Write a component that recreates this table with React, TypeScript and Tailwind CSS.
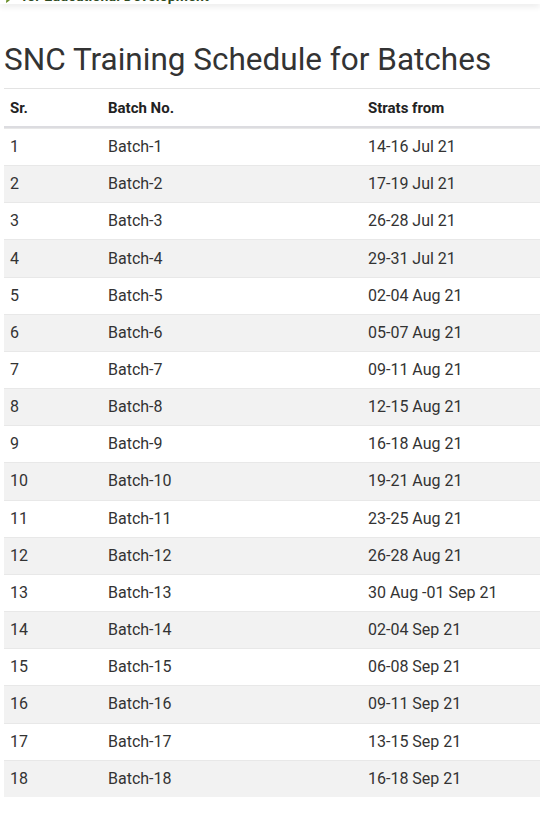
import React from "react";

const rows: [string, string, string][] = [
  ["1", "Batch-1", "14-16 Jul 21"],
  ["2", "Batch-2", "17-19 Jul 21"],
  ["3", "Batch-3", "26-28 Jul 21"],
  ["4", "Batch-4", "29-31 Jul 21"],
  ["5", "Batch-5", "02-04 Aug 21"],
  ["6", "Batch-6", "05-07 Aug 21"],
  ["7", "Batch-7", "09-11 Aug 21"],
  ["8", "Batch-8", "12-15 Aug 21"],
  ["9", "Batch-9", "16-18 Aug 21"],
  ["10", "Batch-10", "19-21 Aug 21"],
  ["11", "Batch-11", "23-25 Aug 21"],
  ["12", "Batch-12", "26-28 Aug 21"],
  ["13", "Batch-13", "30 Aug -01 Sep 21"],
  ["14", "Batch-14", "02-04 Sep 21"],
  ["15", "Batch-15", "06-08 Sep 21"],
  ["16", "Batch-16", "09-11 Sep 21"],
  ["17", "Batch-17", "13-15 Sep 21"],
  ["18", "Batch-18", "16-18 Sep 21"],
];

export default function App() {
  return (
    <div className="w-[540px] h-[838px] bg-white overflow-hidden" style={{ fontFamily: "Roboto, 'Noto Sans', sans-serif" }}>
      <div className="relative h-[4px] overflow-hidden bg-white shadow-[0_2px_6px_rgba(0,0,0,0.12)]">
        <div className="absolute left-[4px] bottom-[1px] flex items-end gap-[6px] leading-[14px]">
          <svg width="12" height="12" viewBox="0 0 12 12">
            <path d="M2 12 C2 6 6 3 11 2 C9 6 7 9 2 12Z" fill="#6a8f2a" />
          </svg>
          <span className="text-[14px] font-bold text-[#2f4a22] tracking-[0.2px]">for Educational Development</span>
        </div>
      </div>
      <h1 className="mt-[37px] ml-[4px] text-[31.5px] leading-[37px] font-normal text-[#333333] whitespace-nowrap">
        SNC Training Schedule for Batches
      </h1>
      <div className="mt-[10px] ml-[4px] border-t border-[#e3e3e3]">
        <div className="grid grid-cols-[98px_260px_1fr] h-[39px] items-center border-b-2 border-[#dcdce0] text-[15px] font-bold text-[#222222]">
          <div className="pl-[6px] pt-[1px]">Sr.</div>
          <div className="pl-[6px] pt-[1px]">Batch No.</div>
          <div className="pl-[6px] pt-[1px]">Strats from</div>
        </div>
        {rows.map((r, i) => (
          <div
            key={r[0]}
            className={`grid grid-cols-[98px_260px_1fr] h-[37.17px] items-center border-t border-[#e8e8e8] text-[16px] text-[#333333] ${i % 2 === 1 ? "bg-[#f2f2f2]" : "bg-white"}`}
          >
            <div className="pl-[6px]">{r[0]}</div>
            <div className="pl-[6px]">{r[1]}</div>
            <div className="pl-[6px]">{r[2]}</div>
          </div>
        ))}
      </div>
    </div>
  );
}
